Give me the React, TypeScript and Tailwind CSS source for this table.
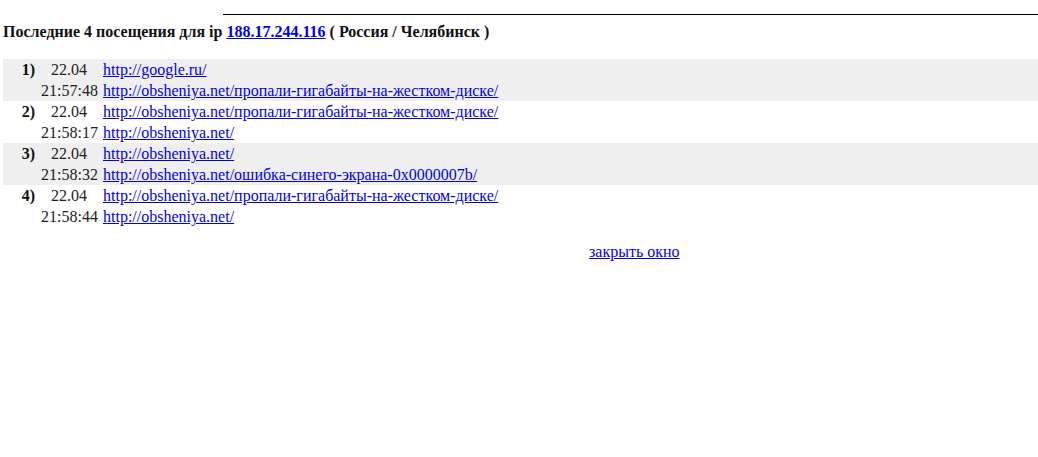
const visits = [
	{
		n: '1)',
		date: '22.04',
		time: '21:57:48',
		urls: [
			'http://google.ru/',
			'http://obsheniya.net/пропали-гигабайты-на-жестком-диске/',
		],
	},
	{
		n: '2)',
		date: '22.04',
		time: '21:58:17',
		urls: [
			'http://obsheniya.net/пропали-гигабайты-на-жестком-диске/',
			'http://obsheniya.net/',
		],
	},
	{
		n: '3)',
		date: '22.04',
		time: '21:58:32',
		urls: [
			'http://obsheniya.net/',
			'http://obsheniya.net/ошибка-синего-экрана-0x0000007b/',
		],
	},
	{
		n: '4)',
		date: '22.04',
		time: '21:58:44',
		urls: [
			'http://obsheniya.net/пропали-гигабайты-на-жестком-диске/',
			'http://obsheniya.net/',
		],
	},
];

export default function App() {
	return (
		<div className="w-[1038px] h-[457px] bg-white text-[#111] font-['Liberation_Serif',serif] text-[16px] overflow-hidden">
			<div className="ml-[223px] border-b border-black h-[15px]" />

			<div className="mt-[7px] ml-[3px] font-bold leading-[20px]">
				Последние 4 посещения для ip{' '}
				<a href="#" className="text-[#0000ee] underline">
					188.17.244.116
				</a>{' '}
				( Россия / Челябинск )
			</div>

			{/* Visits */}
			<div className="mt-[17px] ml-[3px]">
				{visits.map((v, i) => (
					<div
						key={v.n}
						className={`flex leading-[21px] ${i % 2 === 0 ? 'bg-[#efefef]' : ''}`}
					>
						<div className="w-[32px] text-right font-bold">{v.n}</div>
						<div className="w-[56px] ml-[6px] text-center text-[#222]">
							<div>{v.date}</div>
							<div>{v.time}</div>
						</div>
						<div className="ml-[6px]">
							{v.urls.map((u, j) => (
								<div key={j}>
									<a href="#" className="text-[#0000ee] underline">
										{u}
									</a>
								</div>
							))}
						</div>
					</div>
				))}
			</div>

			<div className="mt-[14px] pl-[589px] leading-[21px]">
				<a href="#" className="text-[#0000ee] underline">
					закрыть окно
				</a>
			</div>
		</div>
	);
}
